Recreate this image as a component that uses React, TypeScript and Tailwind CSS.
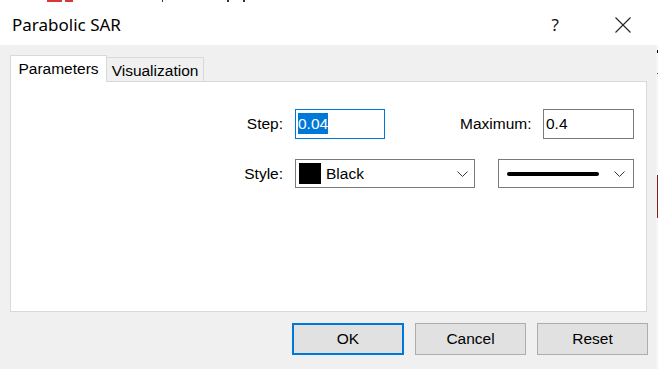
export default function App() {
  const label = "font-['Liberation_Sans',Arial,sans-serif] text-[15.5px] text-black";

  const Chevron = () => (
    <svg width="11" height="6" viewBox="0 0 11 6" className="shrink-0">
      <polyline points="0.5,0.5 5.5,5.5 10.5,0.5" fill="none" stroke="#333" strokeWidth="1" />
    </svg>
  );

  return (
    <div className="w-[658px] h-[369px] overflow-hidden flex bg-[#f0f0f0]">
      <div className="w-[656px] flex flex-col">
        {/* title bar */}
        <div className="h-[45px] bg-white flex flex-col">
          <div className="h-[3px] flex items-start">
            <div className="ml-[47px] w-[15px] h-[2px] bg-[#d23a3a]" />
            <div className="ml-[3px] w-[8px] h-[2px] bg-[#d23a3a]" />
            <div className="ml-[89px] w-px h-[2px] bg-[#333]" />
            <div className="ml-[64px] w-[2px] h-[2px] bg-[#333]" />
            <div className="ml-[14px] w-[2px] h-[2px] bg-[#333]" />
          </div>
          <div className="flex-1 flex items-center pt-[1px]">
            <span className="pl-[12px] font-['Noto_Sans',sans-serif] text-[17px] text-black leading-none">
              Parabolic SAR
            </span>
            <span className="ml-auto font-['Noto_Sans',sans-serif] text-[17px] text-[#111] leading-none">?</span>
            <svg width="16" height="16" viewBox="0 0 16 16" className="ml-[56px] mr-[25px]">
              <path d="M0.5 0.5 L15.5 15.5 M15.5 0.5 L0.5 15.5" stroke="#222" strokeWidth="1.1" fill="none" />
            </svg>
          </div>
        </div>

        {/* body */}
        <div className="flex-1 px-[10px] pt-[10px]">
          <div className="flex items-end h-[26px]">
            <div className={`relative z-10 -mb-px w-[97px] h-[27px] bg-white border border-b-0 border-[#d9d9d9] text-center pt-[4px] leading-[18px] ${label}`}>
              Parameters
            </div>
            <div className={`w-[97px] h-[24px] border-t border-r border-[#d9d9d9] text-center pt-[4px] leading-[18px] ${label}`}>
              Visualization
            </div>
          </div>

          <div className="w-[637px] h-[231px] bg-white border border-[#d9d9d9] pt-[27px] pl-[212px]">
            <div className="flex items-center">
              <div className={`w-[60px] mr-[12px] text-right ${label}`}>Step:</div>
              <div className="w-[90px] h-[30px] border border-[#0078d7] pl-[2px] pt-px">
                <span className={`inline-block bg-[#0078d7] !text-white leading-[21px] ${label}`}>0.04</span>
              </div>
              <div className={`ml-[75px] w-[83px] ${label}`}>Maximum:</div>
              <div className="w-[91px] h-[30px] border border-[#7a7a7a] pl-[2px] pt-px">
                <span className={`inline-block leading-[21px] ${label}`}>0.4</span>
              </div>
            </div>

            <div className="flex items-center mt-[20px]">
              <div className={`w-[60px] mr-[12px] text-right ${label}`}>Style:</div>
              <div className="w-[180px] h-[29px] border border-[#7a7a7a] flex items-center pl-[3px] pr-[6px]">
                <div className="w-[22px] h-[21px] bg-black" />
                <span className={`ml-[5px] ${label}`}>Black</span>
                <div className="ml-auto">
                  <Chevron />
                </div>
              </div>
              <div className="ml-[23px] w-[136px] h-[29px] border border-[#7a7a7a] flex items-center pl-[8px] pr-[8px]">
                <div className="w-[92px] h-[4px] rounded-full bg-black" />
                <div className="ml-auto">
                  <Chevron />
                </div>
              </div>
            </div>
          </div>

          <div className="flex justify-end gap-[11px] mt-[11px] -mr-[2px]">
            <button className={`w-[112px] h-[32px] bg-[#e1e1e1] border-2 border-[#0078d7] ${label}`}>OK</button>
            <button className={`w-[111px] h-[32px] bg-[#e1e1e1] border border-[#adadad] ${label}`}>Cancel</button>
            <button className={`w-[111px] h-[32px] bg-[#e1e1e1] border border-[#adadad] ${label}`}>Reset</button>
          </div>
        </div>
      </div>

      {/* edge of the chart behind the dialog */}
      <div className="w-[2px] flex flex-col bg-[#f5f5f5]">
        <div className="h-[45px] bg-white" />
        <div className="mt-[5px] ml-px w-px h-[3px] bg-black" />
        <div className="mt-[20px] ml-px w-px h-px bg-[#555]" />
        <div className="mt-[101px] ml-px w-px h-[43px] bg-[#8b1a1a]" />
      </div>
    </div>
  );
}
